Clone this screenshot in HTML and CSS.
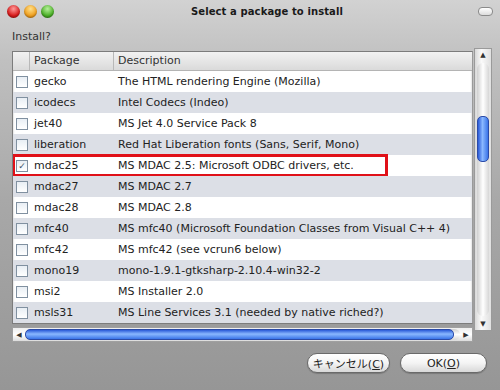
FILE: index.html
```html
<!DOCTYPE html>
<html lang="ja">
<head>
    <meta charset="UTF-8">
    <title>Select a package to install</title>
    <link rel="stylesheet" href="styles.css">
</head>
<body>
    <div class="window">
        <div class="titlebar">
            <div class="lights">
                <span class="light red"></span>
                <span class="light yellow"></span>
                <span class="light green"></span>
            </div>
            <div class="title">Select a package to install</div>
            <span class="pill"></span>
        </div>

        <div class="content">
            <div class="label">Install?</div>

            <div class="list-area">
                <div class="table">
                    <div class="row head">
                        <div class="cell check"></div>
                        <div class="cell pkg">Package</div>
                        <div class="cell desc">Description</div>
                    </div>
                    <div class="row">
                        <div class="cell check"><span class="box"></span></div>
                        <div class="cell pkg">gecko</div>
                        <div class="cell desc">The HTML rendering Engine (Mozilla)</div>
                    </div>
                    <div class="row alt">
                        <div class="cell check"><span class="box"></span></div>
                        <div class="cell pkg">icodecs</div>
                        <div class="cell desc">Intel Codecs (Indeo)</div>
                    </div>
                    <div class="row">
                        <div class="cell check"><span class="box"></span></div>
                        <div class="cell pkg">jet40</div>
                        <div class="cell desc">MS Jet 4.0 Service Pack 8</div>
                    </div>
                    <div class="row alt">
                        <div class="cell check"><span class="box"></span></div>
                        <div class="cell pkg">liberation</div>
                        <div class="cell desc">Red Hat Liberation fonts (Sans, Serif, Mono)</div>
                    </div>
                    <div class="row marked">
                        <div class="cell check"><span class="box checked">&#10003;</span></div>
                        <div class="cell pkg">mdac25</div>
                        <div class="cell desc">MS MDAC 2.5: Microsoft ODBC drivers, etc.</div>
                        <span class="highlight"></span>
                    </div>
                    <div class="row alt">
                        <div class="cell check"><span class="box"></span></div>
                        <div class="cell pkg">mdac27</div>
                        <div class="cell desc">MS MDAC 2.7</div>
                    </div>
                    <div class="row">
                        <div class="cell check"><span class="box"></span></div>
                        <div class="cell pkg">mdac28</div>
                        <div class="cell desc">MS MDAC 2.8</div>
                    </div>
                    <div class="row alt">
                        <div class="cell check"><span class="box"></span></div>
                        <div class="cell pkg">mfc40</div>
                        <div class="cell desc">MS mfc40 (Microsoft Foundation Classes from Visual C++ 4)</div>
                    </div>
                    <div class="row">
                        <div class="cell check"><span class="box"></span></div>
                        <div class="cell pkg">mfc42</div>
                        <div class="cell desc">MS mfc42 (see vcrun6 below)</div>
                    </div>
                    <div class="row alt">
                        <div class="cell check"><span class="box"></span></div>
                        <div class="cell pkg">mono19</div>
                        <div class="cell desc">mono-1.9.1-gtksharp-2.10.4-win32-2</div>
                    </div>
                    <div class="row">
                        <div class="cell check"><span class="box"></span></div>
                        <div class="cell pkg">msi2</div>
                        <div class="cell desc">MS Installer 2.0</div>
                    </div>
                    <div class="row alt">
                        <div class="cell check"><span class="box"></span></div>
                        <div class="cell pkg">msls31</div>
                        <div class="cell desc">MS Line Services 3.1 (needed by native riched?)</div>
                    </div>
                </div>

                <div class="vscroll">
                    <span class="arrow up">&#9650;</span>
                    <div class="vtrack">
                        <span class="vthumb"></span>
                    </div>
                    <span class="arrow down">&#9660;</span>
                </div>

                <div class="hscroll">
                    <span class="arrow left">&#9664;</span>
                    <div class="htrack">
                        <span class="hthumb"></span>
                    </div>
                    <span class="arrow right">&#9654;</span>
                </div>
            </div>

            <div class="buttons">
                <button class="btn cancel">キャンセル(<u>C</u>)</button>
                <button class="btn ok">OK(<u>O</u>)</button>
            </div>
        </div>
    </div>
</body>
</html>
```

FILE: styles.css
```css
body, html {
    margin: 0;
    padding: 0;
    width: 500px;
    height: 390px;
    overflow: hidden;
    font-family: "DejaVu Sans", "Noto Sans CJK JP", sans-serif;
    color: #222222;
}

.window {
    width: 500px;
    height: 390px;
    background: linear-gradient(#d2d2d2 0, #c0c0c0 60px, #a8a8a8 200px, #969696 390px);
}

.titlebar {
    height: 22px;
    display: flex;
    align-items: center;
    padding: 0 7px;
}

.lights {
    display: flex;
    gap: 4px;
}

.light {
    width: 13px;
    height: 13px;
    border-radius: 50%;
    box-shadow: inset 0 -1px 2px rgba(0, 0, 0, 0.3);
}

.light.red {
    background: radial-gradient(circle at 50% 30%, #ff9a9a, #d81c1c 60%, #a40a0a);
}

.light.yellow {
    background: radial-gradient(circle at 50% 30%, #ffe08a, #f0a020 60%, #c07008);
}

.light.green {
    background: radial-gradient(circle at 50% 30%, #b6f09a, #4cb028 60%, #2a7a10);
}

.title {
    flex: 1;
    text-align: center;
    font-weight: 700;
    font-size: 10px;
    color: #1a1a1a;
    padding-left: 2px;
    letter-spacing: 0.1px;
}

.pill {
    width: 13px;
    height: 7px;
    border-radius: 4px;
    border: 1px solid #8a8a8a;
    background: linear-gradient(#ffffff, #dcdcdc);
}

.content {
    padding: 0 8px 0 12px;
}

.label {
    font-size: 11px;
    height: 14px;
    line-height: 14px;
    margin-top: 8px;
    color: #333333;
}

.list-area {
    margin-top: 7px;
    display: grid;
    grid-template-columns: 461px 18px;
    column-gap: 1px;
}

.table {
    background: #ffffff;
    border: 1px solid #7c7c7c;
    border-right-color: #9a9a9a;
    height: 271px;
    overflow: hidden;
    box-shadow: inset 0 1px 2px rgba(0, 0, 0, 0.3);
}

.row {
    position: relative;
    display: flex;
    height: 21px;
    align-items: center;
    font-size: 11px;
    white-space: nowrap;
}

.row.alt {
    background: #dcdfe6;
}

.row.head {
    height: 18px;
    background: linear-gradient(#f2f2f2, #dadada);
    border-bottom: 1px solid #b4b4b4;
    color: #333333;
}

.cell {
    padding-left: 4px;
    box-sizing: border-box;
}

.cell.check {
    width: 17px;
    padding-left: 3px;
    display: flex;
    align-items: center;
}

.cell.pkg {
    width: 84px;
}

.row.head .cell {
    height: 18px;
    line-height: 18px;
    border-right: 1px solid #b8b8b8;
}

.row.head .cell.desc {
    flex: 1;
    border-right: none;
}

.box {
    width: 10px;
    height: 10px;
    border: 1px solid #8090a0;
    background: linear-gradient(#e8eef4, #ffffff);
    font-size: 9px;
    line-height: 10px;
    text-align: center;
    color: #445566;
}

.highlight {
    position: absolute;
    left: -1px;
    top: -1px;
    width: 370px;
    height: 17px;
    border: 3px solid #e01018;
}

.vscroll {
    grid-row: 1 / 3;
    grid-column: 2;
    height: 283px;
    margin-top: -3px;
    display: flex;
    flex-direction: column;
    align-items: center;
    background: linear-gradient(90deg, #d8d8d8, #fafafa 40%, #e0e0e0);
    border: 1px solid #9a9a9a;
    box-sizing: border-box;
}

.arrow {
    font-size: 7px;
    color: #333333;
    line-height: 12px;
    height: 12px;
    text-align: center;
}

.vtrack {
    flex: 1;
    width: 12px;
    margin: 2px 0;
    border-radius: 6px;
    background: linear-gradient(90deg, #cfcfcf, #ffffff 50%, #d6d6d6);
}

.vthumb {
    display: block;
    width: 10px;
    height: 44px;
    margin: 53px auto 0;
    border-radius: 5px;
    background: linear-gradient(90deg, #2a5ad8, #8ab8ff 45%, #3a74e8);
    border: 1px solid #2a4aa8;
}

.hscroll {
    grid-column: 1;
    display: flex;
    align-items: center;
    height: 13px;
    margin-top: 3px;
    background: linear-gradient(#eeeeee, #ffffff 50%, #dcdcdc);
    border: 1px solid #a0a0a0;
}

.arrow.left, .arrow.right {
    width: 12px;
}

.htrack {
    flex: 1;
    height: 11px;
    border-radius: 6px;
    background: linear-gradient(#d0d0d0, #ffffff 50%, #d6d6d6);
}

.hthumb {
    display: block;
    height: 9px;
    width: 427px;
    border-radius: 5px;
    background: linear-gradient(#2a5ad8, #8ab8ff 45%, #3a74e8);
    border: 1px solid #2a4aa8;
}

.buttons {
    display: flex;
    justify-content: flex-end;
    gap: 10px;
    margin-top: 11px;
    padding-right: 5px;
}

.btn {
    height: 20px;
    border-radius: 10px;
    border: 1px solid #6a6a6a;
    background: linear-gradient(#ffffff, #f4f4f4 50%, #d8d8d8);
    font-family: "DejaVu Sans", "Noto Sans CJK JP", sans-serif;
    font-size: 11px;
    color: #222222;
    padding: 0;
    box-shadow: 0 1px 1px rgba(0, 0, 0, 0.2);
}

.btn.cancel {
    width: 83px;
}

.btn.ok {
    width: 87px;
}
```
